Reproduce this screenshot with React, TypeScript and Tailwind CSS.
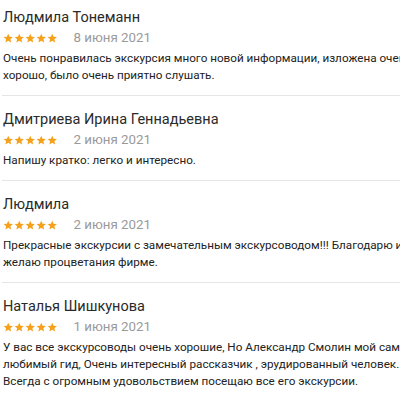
const reviews = [
  {
    name: "Людмила Тонеманн",
    date: "8 июня 2021",
    text: "Очень понравилась экскурсия много новой информации, изложена очень хорошо, было очень приятно слушать.",
  },
  {
    name: "Дмитриева Ирина Геннадьевна",
    date: "2 июня 2021",
    text: "Напишу кратко: легко и интересно.",
  },
  {
    name: "Людмила",
    date: "2 июня 2021",
    text: "Прекрасные экскурсии с замечательным экскурсоводом!!! Благодарю и желаю процветания фирме.",
  },
  {
    name: "Наталья Шишкунова",
    date: "1 июня 2021",
    text: "У вас все экскурсоводы очень хорошие, Но Александр Смолин мой самый любимый гид, Очень интересный рассказчик , эрудированный человек. Всегда с огромным удовольствием посещаю все его экскурсии.",
  },
];

const Stars = () => (
  <div className="flex gap-[0.5px]">
    {[0, 1, 2, 3, 4].map((i) => (
      <svg key={i} viewBox="0 0 24 24" className="w-[10.5px] h-[10.5px]">
        <path fill="#f5a11c" d="M12 1.8l3.1 6.9 7.4.7-5.6 5 1.7 7.4L12 17.9l-6.6 3.9 1.7-7.4-5.6-5 7.4-.7z" />
      </svg>
    ))}
  </div>
);

export default function App() {
  return (
    <div className="w-[400px] h-[400px] overflow-hidden bg-white font-['Roboto',sans-serif]">
      <div className="w-[428px] -mt-[6px]">
        {reviews.map((r) => (
          <div key={r.name} className="pt-[14px] pb-[11px] border-b border-[#e6e6e6] ml-[2px]">
            <div className="text-[14.5px] leading-[20px] text-[#2a2a2a] ml-[1px]">{r.name}</div>
            <div className="flex items-center gap-[16px] mt-[1px] ml-[1px]">
              <Stars />
              <span className="text-[13.3px] leading-[18px] text-[#9a9a9a]">{r.date}</span>
            </div>
            <p className="mt-[3px] text-[11.7px] leading-[17px] text-[#222] ml-[1px]">{r.text}</p>
          </div>
        ))}
      </div>
    </div>
  );
}
